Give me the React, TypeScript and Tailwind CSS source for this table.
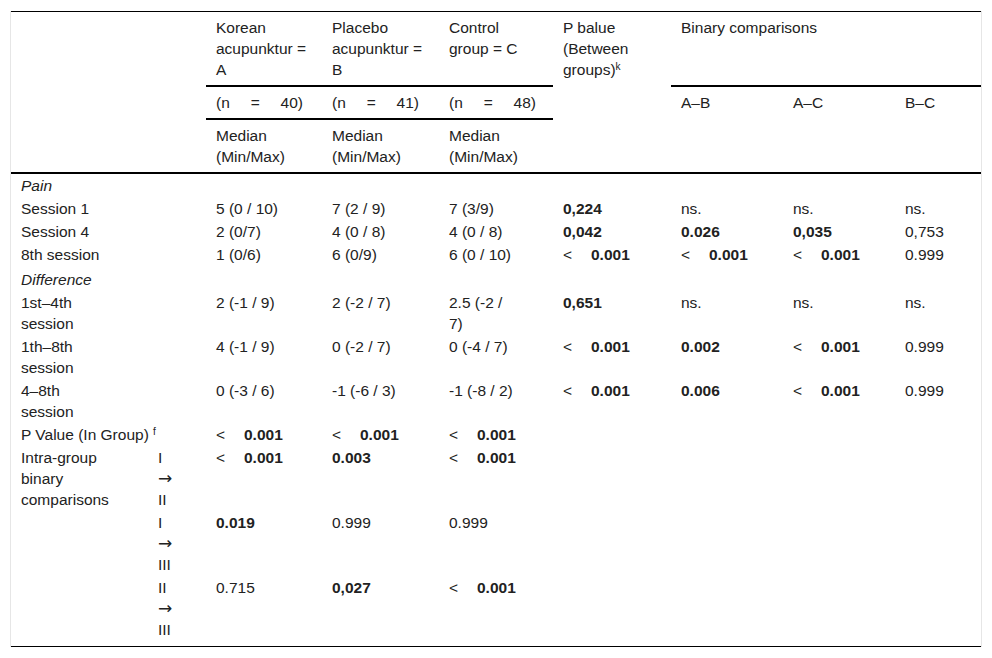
import type { ReactNode } from 'react';

const td = 'pl-[10px] pr-[4px] pt-[1px] pb-[1px] align-top text-left font-normal whitespace-nowrap';
const th = 'pl-[10px] pr-[4px] pt-[5px] pb-[5px] align-top text-left font-normal whitespace-nowrap';

function Lt() {
  return (
    <span className="inline-flex">
      <span className="inline-block w-[28px]">&lt;</span>
      <b>0.001</b>
    </span>
  );
}

function N({ n }: { n: string }) {
  return (
    <span className="flex w-[87px] justify-between">
      <span>(n</span>
      <span>=</span>
      <span>{n})</span>
    </span>
  );
}

function Arrow({ from, to }: { from: string; to: string }) {
  return (
    <>
      {from}
      <br />
      <span className="text-[17px]" style={{ fontFamily: '"DejaVu Sans", sans-serif' }}>→</span>
      <br />
      {to}
    </>
  );
}

type Row = { label: ReactNode; cells: ReactNode[] };

const lt = <Lt />;
const b = (s: string) => <b>{s}</b>;

const rows: Row[] = [
  { label: 'Session 1', cells: ['5 (0 / 10)', '7 (2 / 9)', '7 (3/9)', b('0,224'), 'ns.', 'ns.', 'ns.'] },
  { label: 'Session 4', cells: ['2 (0/7)', '4 (0 / 8)', '4 (0 / 8)', b('0,042'), b('0.026'), b('0,035'), '0,753'] },
  { label: '8th session', cells: ['1 (0/6)', '6 (0/9)', '6 (0 / 10)', lt, lt, lt, '0.999'] },
];

const diffRows: Row[] = [
  {
    label: <>1st–4th<br />session</>,
    cells: ['2 (-1 / 9)', '2 (-2 / 7)', <>2.5 (-2 /<br />7)</>, b('0,651'), 'ns.', 'ns.', 'ns.'],
  },
  { label: <>1th–8th<br />session</>, cells: ['4 (-1 / 9)', '0 (-2 / 7)', '0 (-4 / 7)', lt, b('0.002'), lt, '0.999'] },
  { label: <>4–8th<br />session</>, cells: ['0 (-3 / 6)', '-1 (-6 / 3)', '-1 (-8 / 2)', lt, b('0.006'), lt, '0.999'] },
];

function BodyRow({ row }: { row: Row }) {
  return (
    <tr>
      <td colSpan={2} className={td}>{row.label}</td>
      {row.cells.map((c, i) => (
        <td key={i} className={td}>{c}</td>
      ))}
    </tr>
  );
}

export default function App() {
  return (
    <div className="min-h-[658px] bg-white pt-[11px] text-[15.5px] leading-[21px] text-[#222]" style={{ fontFamily: '"Liberation Sans", Arial, sans-serif' }}>
      <div className="mx-[10px] w-[972px] border-x border-[#e6e6e6]">
        <table className="w-[970px] table-fixed border-collapse border-y border-black">
          <colgroup>
            <col className="w-[137px]" />
            <col className="w-[58px]" />
            <col className="w-[116px]" />
            <col className="w-[117px]" />
            <col className="w-[114px]" />
            <col className="w-[118px]" />
            <col className="w-[112px]" />
            <col className="w-[112px]" />
            <col className="w-[86px]" />
          </colgroup>
          <thead>
            <tr>
              <th rowSpan={3} colSpan={2} className={`${th} border-b-2 border-black`} />
              <th className={`${th} border-b-2 border-black`}>Korean<br />acupunktur =<br />A</th>
              <th className={`${th} border-b-2 border-black`}>Placebo<br />acupunktur =<br />B</th>
              <th className={`${th} border-b-2 border-black`}>Control<br />group = C</th>
              <th rowSpan={3} className={`${th} border-b-2 border-black`}>
                P balue<br />(Between<br />groups)<sup className="text-[10px]">k</sup>
              </th>
              <th colSpan={3} className={`${th} border-b-2 border-black`}>Binary comparisons</th>
            </tr>
            <tr>
              <th className={`${th} border-b-2 border-black`}><N n="40" /></th>
              <th className={`${th} border-b-2 border-black`}><N n="41" /></th>
              <th className={`${th} border-b-2 border-black`}><N n="48" /></th>
              <th rowSpan={2} className={`${th} border-b-2 border-black`}>A–B</th>
              <th rowSpan={2} className={`${th} border-b-2 border-black`}>A–C</th>
              <th rowSpan={2} className={`${th} border-b-2 border-black`}>B–C</th>
            </tr>
            <tr>
              <th className={`${th} border-b-2 border-black`}>Median<br />(Min/Max)</th>
              <th className={`${th} border-b-2 border-black`}>Median<br />(Min/Max)</th>
              <th className={`${th} border-b-2 border-black`}>Median<br />(Min/Max)</th>
            </tr>
          </thead>
          <tbody>
            <tr>
              <td colSpan={9} className={`${td} italic`}>Pain</td>
            </tr>
            {rows.map((r, i) => (
              <BodyRow key={i} row={r} />
            ))}
            <tr>
              <td colSpan={9} className={`${td} pt-[3px] italic`}>Difference</td>
            </tr>
            {diffRows.map((r, i) => (
              <BodyRow key={i} row={r} />
            ))}
            <tr>
              <td colSpan={2} className={td}>
                P Value (In Group) <sup className="text-[10px]">f</sup>
              </td>
              <td className={td}>{lt}</td>
              <td className={td}>{lt}</td>
              <td className={td}>{lt}</td>
              <td colSpan={4} />
            </tr>
            <tr>
              <td rowSpan={3} className={td}>Intra-group<br />binary<br />comparisons</td>
              <td className={td}><Arrow from="I" to="II" /></td>
              <td className={td}>{lt}</td>
              <td className={td}><b>0.003</b></td>
              <td className={td}>{lt}</td>
              <td colSpan={4} />
            </tr>
            <tr>
              <td className={td}><Arrow from="I" to="III" /></td>
              <td className={td}><b>0.019</b></td>
              <td className={td}>0.999</td>
              <td className={td}>0.999</td>
              <td colSpan={4} />
            </tr>
            <tr>
              <td className={`${td} pb-[6px]`}><Arrow from="II" to="III" /></td>
              <td className={`${td} pb-[6px]`}>0.715</td>
              <td className={`${td} pb-[6px]`}><b>0,027</b></td>
              <td className={`${td} pb-[6px]`}>{lt}</td>
              <td colSpan={4} />
            </tr>
          </tbody>
        </table>
      </div>
    </div>
  );
}
